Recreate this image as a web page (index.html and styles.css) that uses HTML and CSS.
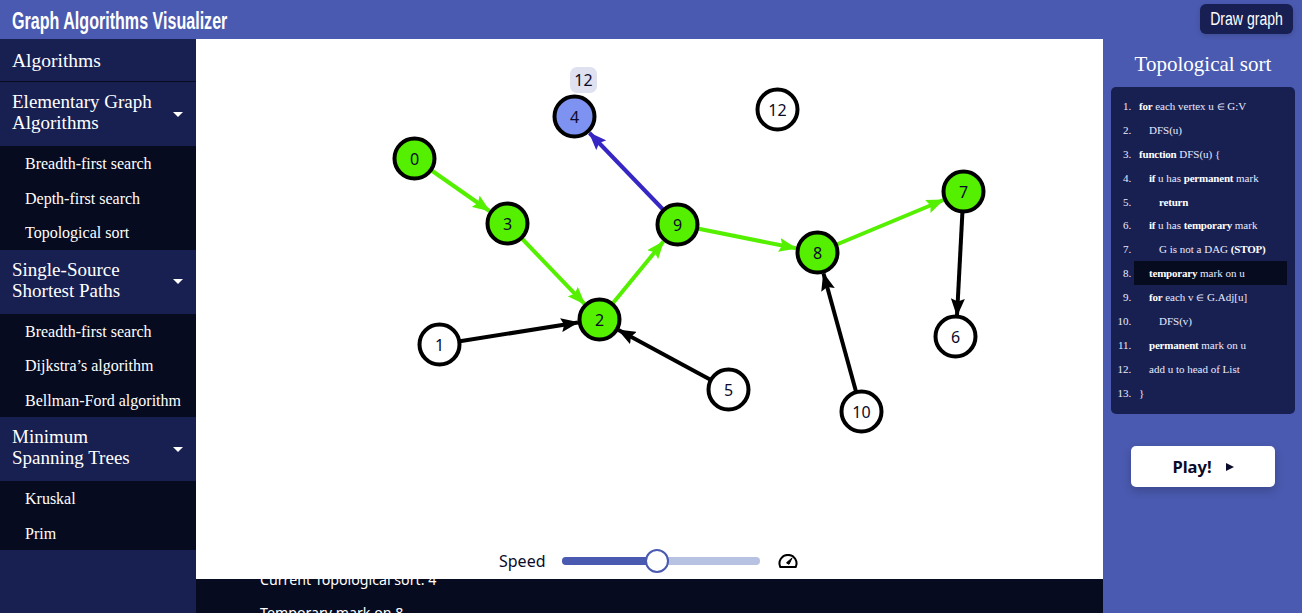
FILE: index.html
```html
<!DOCTYPE html>
<html lang="en">
<head>
    <meta charset="UTF-8">
    <meta name="viewport" content="width=device-width, initial-scale=1.0">
    <title>Graph Algorithms Visualizer</title>
    <link rel="stylesheet" href="styles.css">
</head>
<body>
    <header class="topbar">
        <h1 class="brand"><span>Graph Algorithms Visualizer</span></h1>
        <button class="draw-btn"><span>Draw graph</span></button>
    </header>

    <div class="layout">
        <!-- Algorithm menu -->
        <nav class="sidebar">
            <div class="side-title">Algorithms</div>

            <div class="group-head">
                <span>Elementary Graph<br>Algorithms</span>
                <i class="caret"></i>
            </div>
            <ul class="group-items">
                <li>Breadth-first search</li>
                <li>Depth-first search</li>
                <li>Topological sort</li>
            </ul>

            <div class="group-head">
                <span>Single-Source<br>Shortest Paths</span>
                <i class="caret"></i>
            </div>
            <ul class="group-items">
                <li>Breadth-first search</li>
                <li>Dijkstra’s algorithm</li>
                <li>Bellman-Ford algorithm</li>
            </ul>

            <div class="group-head">
                <span>Minimum<br>Spanning Trees</span>
                <i class="caret"></i>
            </div>
            <ul class="group-items">
                <li>Kruskal</li>
                <li>Prim</li>
            </ul>
        </nav>

        <main class="center">
            <section class="stage">
                <svg class="graph" viewBox="195.500 38.500 907 498" width="907" height="498">
                    <defs>
                        <marker id="head-black" markerUnits="userSpaceOnUse" markerWidth="18" markerHeight="14" refX="17" refY="7" orient="auto"><path d="M0 0L18 7L0 14L3 7Z" fill="#000"/></marker>
                        <marker id="head-green" markerUnits="userSpaceOnUse" markerWidth="18" markerHeight="14" refX="17" refY="7" orient="auto"><path d="M0 0L18 7L0 14L3 7Z" fill="#55f000"/></marker>
                        <marker id="head-blue" markerUnits="userSpaceOnUse" markerWidth="18" markerHeight="14" refX="17" refY="7" orient="auto"><path d="M0 0L18 7L0 14L3 7Z" fill="#3626c4"/></marker>
                    </defs>

                    <!-- edges, stopped at the rim of the target node -->
                    <line class="edge green" x1="414" y1="158" x2="489" y2="210.500" marker-end="url(#head-green)"/>
                    <line class="edge green" x1="507" y1="223" x2="584" y2="303.400" marker-end="url(#head-green)"/>
                    <line class="edge green" x1="599" y1="319" x2="663" y2="241" marker-end="url(#head-green)"/>
                    <line class="edge blue" x1="677" y1="224" x2="589" y2="132.500" marker-end="url(#head-blue)"/>
                    <line class="edge green" x1="677" y1="224" x2="795.500" y2="247.800" marker-end="url(#head-green)"/>
                    <line class="edge green" x1="817" y1="252" x2="943" y2="199.500" marker-end="url(#head-green)"/>
                    <line class="edge black" x1="963" y1="191" x2="956.500" y2="315" marker-end="url(#head-black)"/>
                    <line class="edge black" x1="861" y1="411" x2="823" y2="273" marker-end="url(#head-black)"/>
                    <line class="edge black" x1="439" y1="344" x2="577.500" y2="322" marker-end="url(#head-black)"/>
                    <line class="edge black" x1="728" y1="389" x2="618" y2="329.500" marker-end="url(#head-black)"/>

                    <g class="node done"><circle cx="414" cy="158" r="20"/><text x="414" y="158">0</text></g>
                    <g class="node done"><circle cx="507" cy="223" r="20"/><text x="507" y="223">3</text></g>
                    <g class="node done"><circle cx="599" cy="319" r="20"/><text x="599" y="319">2</text></g>
                    <g class="node done"><circle cx="677" cy="224" r="20"/><text x="677" y="224">9</text></g>
                    <g class="node active"><circle cx="574" cy="116" r="20"/><text x="574" y="116">4</text></g>
                    <g class="node done"><circle cx="817" cy="252" r="20"/><text x="817" y="252">8</text></g>
                    <g class="node done"><circle cx="963" cy="191" r="20"/><text x="963" y="191">7</text></g>
                    <g class="node"><circle cx="955" cy="336" r="20"/><text x="955" y="336">6</text></g>
                    <g class="node"><circle cx="439" cy="344" r="20"/><text x="439" y="344">1</text></g>
                    <g class="node"><circle cx="728" cy="389" r="20"/><text x="728" y="389">5</text></g>
                    <g class="node"><circle cx="861" cy="411" r="20"/><text x="861" y="411">10</text></g>
                    <g class="node"><circle cx="777" cy="109" r="20"/><text x="777" y="109">12</text></g>
                </svg>
                <div class="tag">12</div>

                <div class="speed">
                    <span class="speed-label">Speed</span>
                    <div class="slider"><div class="slider-fill"></div><div class="slider-thumb"></div></div>
                    <svg class="gauge" viewBox="0 0 20 14" width="20" height="14">
                        <path d="M2.300 13A8.500 8.500 0 1 1 17.700 13Z" fill="none" stroke="#000" stroke-width="2" stroke-linejoin="round"/>
                        <path d="M8.500 8.800L14 4L11 10.300Z" fill="#000" stroke="#000" stroke-width="1" stroke-linejoin="round"/>
                    </svg>
                </div>
            </section>

            <!-- Step log, scrolled so the top line is cut off -->
            <section class="log">
                <div class="log-scroll">
                    <p>Current Topological sort: 4</p>
                    <p>Temporary mark on 8</p>
                </div>
            </section>
        </main>

        <aside class="panel">
            <h2 class="panel-title">Topological sort</h2>
            <ol class="code">
                <li><b>for</b> each vertex u <small>∈</small> G:V</li>
                <li class="in1">DFS(u)</li>
                <li><b>function</b> DFS(u) {</li>
                <li class="in1"><b>if</b> u has <b>permanent</b> mark</li>
                <li class="in2"><b>return</b></li>
                <li class="in1"><b>if</b> u has <b>temporary</b> mark</li>
                <li class="in2">G is not a DAG <b>(STOP)</b></li>
                <li class="in1 current"><b>temporary</b> mark on u</li>
                <li class="in1"><b>for</b> each v <small>∈</small> G.Adj[u]</li>
                <li class="in2">DFS(v)</li>
                <li class="in1"><b>permanent</b> mark on u</li>
                <li class="in1">add u to head of List</li>
                <li>}</li>
            </ol>
            <button class="play-btn">Play! <i class="play-icon"></i></button>
        </aside>
    </div>
</body>
</html>
```

FILE: styles.css
```css
* {
    box-sizing: border-box;
}

html, body {
    height: 100%;
}

body {
    margin: 0;
    overflow: hidden;
    background-color: #4a5ab0;
    font-family: "Liberation Serif", serif;
    color: #fff;
}

.topbar {
    height: 39px;
    display: flex;
    align-items: flex-start;
    justify-content: space-between;
    padding: 4px 9px 0 12px;
}

.brand {
    margin: 0;
    font-family: "Liberation Sans", sans-serif;
    font-size: 24px;
    line-height: 33px;
    font-weight: 700;
    white-space: nowrap;
}

/* no condensed face installed, so squeeze the normal one */
.brand span {
    display: inline-block;
    transform: scaleX(0.67);
    transform-origin: left center;
}

.draw-btn {
    width: 93px;
    height: 30px;
    padding: 0;
    border: 0;
    border-radius: 6px;
    background-color: #181f52;
    color: #fff;
    font-family: "Liberation Sans", sans-serif;
    font-size: 18px;
    white-space: nowrap;
    box-shadow: 0 2px 5px rgba(0, 0, 0, 0.15);
}

.draw-btn span {
    display: inline-block;
    transform: scaleX(0.78);
}

.layout {
    display: flex;
    height: 574px;
}

.sidebar {
    width: 196px;
    flex-shrink: 0;
    background-color: #182052;
}

.side-title {
    height: 43px;
    padding: 10px 12px 0;
    font-size: 19.500px;
    line-height: 24px;
    border-bottom: 1px solid #070b20;
}

.group-head {
    height: 64px;
    padding: 9px 12px 0;
    display: flex;
    align-items: center;
    justify-content: space-between;
    font-size: 19px;
    line-height: 21px;
}

.group-head span {
    align-self: flex-start;
    white-space: nowrap;
}

.caret {
    width: 0;
    height: 0;
    margin-top: -9px;
    margin-right: 1px;
    border-left: 5px solid transparent;
    border-right: 5px solid transparent;
    border-top: 5px solid #fff;
}

.group-items {
    margin: 0;
    padding: 0;
    list-style: none;
    background-color: #070b20;
    font-size: 16px;
}

.group-items li {
    height: 34.500px;
    padding-left: 25px;
    line-height: 35px;
    white-space: nowrap;
}

.center {
    width: 907px;
    flex-shrink: 0;
    display: flex;
    flex-direction: column;
}

.stage {
    position: relative;
    height: 540px;
    background-color: #fff;
}

.graph {
    display: block;
}

.edge {
    stroke-width: 4;
}

.edge.black {
    stroke: #000;
}

.edge.green {
    stroke: #55f000;
}

.edge.blue {
    stroke: #3626c4;
}

.node circle {
    fill: #fff;
    stroke: #000;
    stroke-width: 4;
}

.node.done circle {
    fill: #55f000;
}

.node.active circle {
    fill: #7e92f2;
}

.node text {
    font-family: "Noto Sans", sans-serif;
    font-size: 16px;
    fill: #0a0a2a;
    text-anchor: middle;
    dominant-baseline: central;
}

.tag {
    position: absolute;
    left: 374px;
    top: 28px;
    width: 27px;
    height: 26px;
    border-radius: 7px;
    background-color: #dfe1f1;
    color: #0a0a2a;
    font-family: "Noto Sans", sans-serif;
    font-size: 16px;
    line-height: 26px;
    text-align: center;
}

.speed {
    display: flex;
    align-items: center;
    height: 28px;
    margin-top: 10px;
    padding-left: 303px;
    color: #0a0a2a;
}

.speed-label {
    width: 63px;
    font-family: "Noto Sans", sans-serif;
    font-size: 16px;
}

.slider {
    position: relative;
    width: 198px;
    height: 8px;
    border-radius: 4px;
    background-color: #b7c1e2;
}

.slider-fill {
    width: 95px;
    height: 8px;
    border-radius: 4px 0 0 4px;
    background-color: #4a5ab0;
}

.slider-thumb {
    position: absolute;
    left: 83px;
    top: -8px;
    width: 24px;
    height: 24px;
    border: 2px solid #4a5ab0;
    border-radius: 50%;
    background-color: #fff;
}

.gauge {
    margin-left: 18px;
}

.log {
    flex: 1;
    overflow: hidden;
    background-color: #070b20;
    font-family: "Noto Sans", sans-serif;
    font-size: 14.200px;
}

.log-scroll {
    margin-top: -9px;
    padding-left: 64px;
}

.log-scroll p {
    margin: 0 0 10px;
    line-height: 20px;
}

.log-scroll p + p {
    margin-top: 13px;
}

.panel {
    flex: 1;
    padding: 0 7px 0 8px;
}

.panel-title {
    margin: 12px 0 10px;
    font-size: 21px;
    line-height: 26px;
    font-weight: 400;
    text-align: center;
}

.code {
    margin: 0;
    padding: 7px 8px 9px 23px;
    height: 327px;
    border-radius: 5px;
    background-color: #182052;
    font-size: 11px;
    list-style-position: outside;
}

.code li {
    height: 23.900px;
    line-height: 24px;
    white-space: nowrap;
    padding-left: 5px;
    color: #e8ebff;
}

.code b {
    color: #fff;
    letter-spacing: -0.2px;
}

.code small {
    font-size: 9px;
}

.code .in1 {
    padding-left: 15px;
}

.code .in2 {
    padding-left: 25px;
}

.code .current {
    background-color: #070b20;
}

.play-btn {
    display: flex;
    align-items: center;
    justify-content: center;
    gap: 14px;
    width: 144px;
    height: 41px;
    margin: 32px 0 0 20px;
    border: 0;
    border-radius: 5px;
    background-color: #fff;
    color: #0a0a2a;
    font-family: "Noto Sans", sans-serif;
    font-size: 16.500px;
    font-weight: 700;
    box-shadow: 0 4px 10px rgba(0, 0, 0, 0.2);
}

.play-icon {
    width: 0;
    height: 0;
    border-top: 4.500px solid transparent;
    border-bottom: 4.500px solid transparent;
    border-left: 8px solid #0a0a2a;
}
```
